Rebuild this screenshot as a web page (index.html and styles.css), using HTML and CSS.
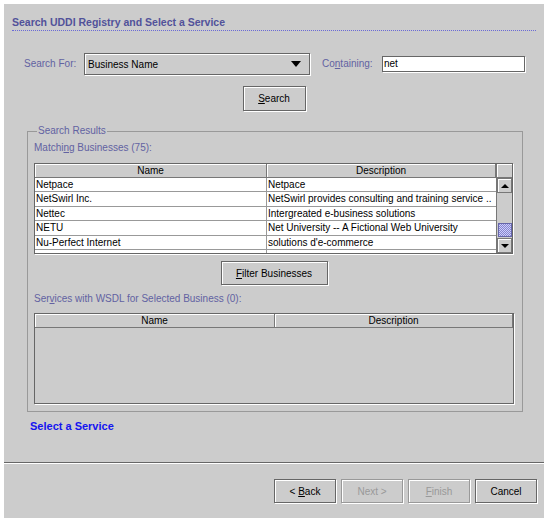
FILE: index.html
```html
<!DOCTYPE html>
<html lang="en">
<head>
    <meta charset="UTF-8">
    <title>Search UDDI Registry</title>
    <link rel="stylesheet" href="styles.css">
</head>
<body>
    <div class="wizard">
        <div class="content">
            <div class="heading">Search UDDI Registry and Select a Service</div>
            <div class="search-row">
                <span class="field-label for-label">Search For:</span>
                <div class="combo">
                    <span class="combo-text">Business Name</span>
                    <span class="combo-arrow"></span>
                </div>
                <span class="field-label contain-label">Co<u>n</u>taining:</span>
                <div class="text-field">net</div>
            </div>
            <div class="center-row">
                <button class="btn search-btn"><u>S</u>earch</button>
            </div>
            <fieldset class="results">
                <legend>Search Results</legend>
                <div class="list-label">Matchi<u>n</u>g Businesses (75):</div>
                <div class="table biz-table">
                    <div class="table-data">
                        <div class="table-head">
                            <div class="head-cell name-col">Name</div>
                            <div class="head-cell desc-col">Description</div>
                        </div>
                        <div class="table-body">
                            <div class="row"><div class="cell name-col">Netpace</div><div class="cell desc-col">Netpace</div></div>
                            <div class="row"><div class="cell name-col">NetSwirl Inc.</div><div class="cell desc-col">NetSwirl provides consulting and training service ..</div></div>
                            <div class="row"><div class="cell name-col">Nettec</div><div class="cell desc-col">Intergreated e-business solutions</div></div>
                            <div class="row"><div class="cell name-col">NETU</div><div class="cell desc-col">Net University -- A Fictional Web University</div></div>
                            <div class="row"><div class="cell name-col">Nu-Perfect Internet</div><div class="cell desc-col">solutions d'e-commerce</div></div>
                            <div class="row"><div class="cell name-col"></div><div class="cell desc-col"></div></div>
                        </div>
                    </div>
                    <div class="scrollbar">
                        <div class="corner"></div>
                        <div class="scroll-btn"><span class="arrow-up"></span></div>
                        <div class="track"><div class="thumb"></div></div>
                        <div class="scroll-btn"><span class="arrow-down"></span></div>
                    </div>
                </div>
                <div class="center-row filter-row">
                    <button class="btn filter-btn"><u>F</u>ilter Businesses</button>
                </div>
                <div class="list-label services-label">Ser<u>v</u>ices with WSDL for Selected Business (0):</div>
                <div class="table service-table">
                    <div class="table-data">
                        <div class="table-head">
                            <div class="head-cell svc-name-col">Name</div>
                            <div class="head-cell desc-col">Description</div>
                        </div>
                        <div class="table-empty"></div>
                    </div>
                </div>
            </fieldset>
            <div class="step-label">Select a Service</div>
        </div>
        <div class="footer">
            <button class="btn nav-btn">&lt; <u>B</u>ack</button>
            <button class="btn nav-btn" disabled>Next &gt;</button>
            <button class="btn nav-btn" disabled><u>F</u>inish</button>
            <button class="btn nav-btn">Cancel</button>
        </div>
    </div>
</body>
</html>
```

FILE: styles.css
```css
body { margin: 0; background: #fff; font-family: "Liberation Sans", Arial, sans-serif; font-size: 10px; color: #000; }
u { text-underline-offset: 1px; }
.wizard { margin: 4px 5px 0 4px; height: 514px; background: #ccc; display: flex; flex-direction: column; }
.content { height: 458px; padding: 0 8px 0 8px; box-sizing: border-box; }
.heading { margin-top: 12px; line-height: 13px; padding-bottom: 1px; font-size: 10.5px; font-weight: bold; color: #52529a; border-bottom: 1px dotted #6a6ad6; }

.search-row { margin-top: 22px; height: 22px; display: flex; align-items: center; }
.field-label { color: #6262a2; line-height: 12px; }
.for-label { margin-left: 12px; width: 60px; }
.contain-label { margin-left: 12px; width: 60px; }
.combo { width: 226px; height: 22px; box-sizing: border-box; border: 1px solid #666; box-shadow: inset 1px 1px 0 #fff, 1px 1px 0 #fff; display: flex; align-items: center; justify-content: space-between; padding: 0 8px 0 3px; }
.combo-arrow { width: 0; height: 0; border-left: 5px solid transparent; border-right: 5px solid transparent; border-top: 6px solid #000; }
.text-field { width: 143px; height: 16px; box-sizing: border-box; background: #fff; border: 1px solid #666; box-shadow: 1px 1px 0 #fff; padding-left: 1px; line-height: 14px; }

.center-row { display: flex; justify-content: center; }
.center-row .btn { margin-top: 11px; }
.btn { font-family: "Liberation Sans", Arial, sans-serif; font-size: 10px; color: #000; background: #ccc; border: 1px solid #666; box-shadow: inset 1px 1px 0 #fff, 1px 1px 0 #fff; padding: 0; box-sizing: border-box; }
.btn:disabled { color: #999; border-color: #999; }
.search-btn { width: 63px; height: 25px; }

.results { margin: 14px 0 0 15px; width: 496px; box-sizing: border-box; border: 1px solid #999; padding: 5px 8px 7px 6px; }
.results legend { margin-left: 3px; padding: 0 1px; line-height: 12px; color: #6262a2; }
.list-label { line-height: 12px; color: #6262a2; }

.table { margin-top: 9px; height: 91px; box-sizing: border-box; border: 1px solid #666; box-shadow: 1px 1px 0 #fff; display: flex; }
.biz-table { width: 479px; }
.service-table { width: 480px; margin-top: 8px; }
.table-data { flex: 1; display: flex; flex-direction: column; overflow: hidden; }
.table-head { display: flex; height: 14px; box-sizing: border-box; border-bottom: 1px solid #777; }
.head-cell { background: #ccc; box-shadow: inset 1px 1px 0 #fff; border-right: 1px solid #777; text-align: center; line-height: 13px; box-sizing: border-box; }
.name-col { width: 232px; flex: none; }
.svc-name-col { width: 240px; flex: none; }
.desc-col { flex: 1; min-width: 0; }
.table-body { flex: 1; background: #fff; overflow: hidden; }
.row { display: flex; height: 14.4px; box-sizing: border-box; border-bottom: 1px solid #999; }
.cell { line-height: 13.4px; padding-left: 1px; white-space: nowrap; overflow: hidden; box-sizing: border-box; }
.cell.name-col { border-right: 1px solid #999; }
.table-empty { flex: 1; background: #ccc; }

.scrollbar { width: 15px; display: flex; flex-direction: column; border-left: 1px solid #777; }
.corner { height: 14px; box-sizing: border-box; border-bottom: 1px solid #777; box-shadow: inset 1px 1px 0 #fff; }
.scroll-btn { height: 15px; box-sizing: border-box; border: 1px solid #777; box-shadow: inset 1px 1px 0 #fff; display: flex; align-items: center; justify-content: center; }
.arrow-up { width: 0; height: 0; border-left: 4px solid transparent; border-right: 4px solid transparent; border-bottom: 4px solid #000; }
.arrow-down { width: 0; height: 0; border-left: 4px solid transparent; border-right: 4px solid transparent; border-top: 4px solid #000; }
.track { flex: 1; display: flex; flex-direction: column; justify-content: flex-end; padding-bottom: 1px; }
.thumb { height: 14px; margin-left: 1px; box-sizing: border-box; border: 1px solid #66a; background-color: #99c; background-image: conic-gradient(#ccf 25%, #88c 0 50%, #ccf 0 75%, #88c 0); background-size: 2px 2px; }

.filter-row .btn { margin-top: 7px; }
.filter-btn { width: 107px; height: 24px; }
.services-label { margin-top: 8px; }

.step-label { margin: 8px 0 0 18px; line-height: 13px; font-size: 11px; font-weight: bold; color: #1414f0; }

.footer { flex: 1; border-top: 1px solid #666; box-shadow: inset 0 1px 0 #fff; display: flex; justify-content: flex-end; align-items: flex-start; gap: 5px; padding: 16px 7px 0 0; }
.nav-btn { width: 62px; height: 24px; }
```
